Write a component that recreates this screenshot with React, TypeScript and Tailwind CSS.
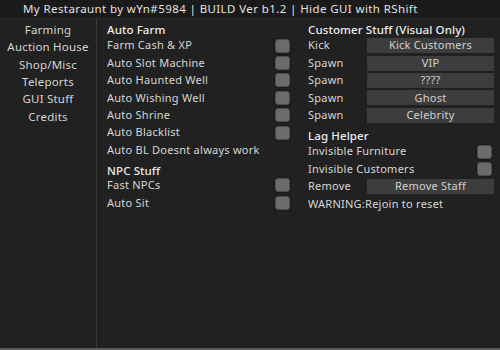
import { ReactNode } from "react";

const tabs = ["Farming", "Auction House", "Shop/Misc", "Teleports", "GUI Stuff", "Credits"];

const Check = () => (
  <div className="w-[15px] h-[14px] rounded-[3px] bg-[#6b6b6b] border border-[#4e4e4e] shadow-[0_0_2px_#111]" />
);

const Heading = ({ children }: { children: ReactNode }) => (
  <div className="h-[13px] flex items-center text-[11.5px] font-medium tracking-[0.1px] text-[#ededed]">{children}</div>
);

const ToggleRow = ({ label, right = "mr-0" }: { label: string; right?: string }) => (
  <div className="h-[17.4px] flex items-center justify-between">
    <span>{label}</span>
    <div className={right}>
      <Check />
    </div>
  </div>
);

const TextRow = ({ label }: { label: string }) => (
  <div className="h-[17.4px] flex items-center">{label}</div>
);

const ButtonRow = ({ label, text }: { label: string; text: string }) => (
  <div className="h-[17.4px] flex items-center">
    <span className="w-[59px]">{label}</span>
    <div className="flex-1 h-[15px] bg-[#3d3d3d] flex items-center justify-center text-[#d0d0d0]">{text}</div>
  </div>
);

export default function App() {
  return (
    <div
      className="w-[500px] h-[350px] bg-[#212121] flex flex-col text-[11px] tracking-[0.25px] text-[#d6d6d6] overflow-hidden"
      style={{ fontFamily: '"Noto Sans", "DejaVu Sans", sans-serif' }}
    >
      {/* title bar */}
      <div className="h-[19px] shrink-0 bg-[#1a1a1a] border-b border-[#2c2c2c] flex items-center pl-[23px] text-[11.5px] tracking-[0.4px] text-[#e2e2e2]">
        My Restaraunt by wYn#5984 | BUILD Ver b1.2 | Hide GUI with RShift
      </div>

      <div className="flex flex-1">
        {/* sidebar */}
        <div className="w-[97px] shrink-0 border-r border-[#3a3a3a] flex flex-col items-center pt-[2px] text-[11.5px] tracking-[0.2px] text-[#d4d4d4]">
          {tabs.map((t) => (
            <div key={t} className="h-[17.3px] flex items-center">
              {t}
            </div>
          ))}
        </div>

        {/* left column */}
        <div className="w-[194px] pl-[10px] pt-[4px] flex flex-col">
          <Heading>Auto Farm</Heading>
          <div className="h-[1px]" />
          <ToggleRow label="Farm Cash & XP" right="mr-[1px]" />
          <ToggleRow label="Auto Slot Machine" right="mr-[1px]" />
          <ToggleRow label="Auto Haunted Well" right="mr-[1px]" />
          <ToggleRow label="Auto Wishing Well" right="mr-[1px]" />
          <ToggleRow label="Auto Shrine" right="mr-[1px]" />
          <ToggleRow label="Auto Blacklist" right="mr-[1px]" />
          <TextRow label="Auto BL Doesnt always work" />
          <div className="h-[5px]" />
          <Heading>NPC Stuff</Heading>
          <ToggleRow label="Fast NPCs" right="mr-[1px]" />
          <ToggleRow label="Auto Sit" right="mr-[1px]" />
        </div>

        {/* right column */}
        <div className="w-[186px] ml-[17px] pt-[4px] flex flex-col">
          <Heading>Customer Stuff (Visual Only)</Heading>
          <div className="h-[1px]" />
          <ButtonRow label="Kick" text="Kick Customers" />
          <ButtonRow label="Spawn" text="VIP" />
          <ButtonRow label="Spawn" text="????" />
          <ButtonRow label="Spawn" text="Ghost" />
          <ButtonRow label="Spawn" text="Celebrity" />
          <div className="h-[5px]" />
          <Heading>Lag Helper</Heading>
          <div className="h-[1px]" />
          <ToggleRow label="Invisible Furniture" right="mr-[2px]" />
          <ToggleRow label="Invisible Customers" right="mr-[2px]" />
          <ButtonRow label="Remove" text="Remove Staff" />
          <TextRow label="WARNING:Rejoin to reset" />
        </div>
      </div>
      <div className="h-[2px] shrink-0 bg-[#5a5a5a]" />
    </div>
  );
}
